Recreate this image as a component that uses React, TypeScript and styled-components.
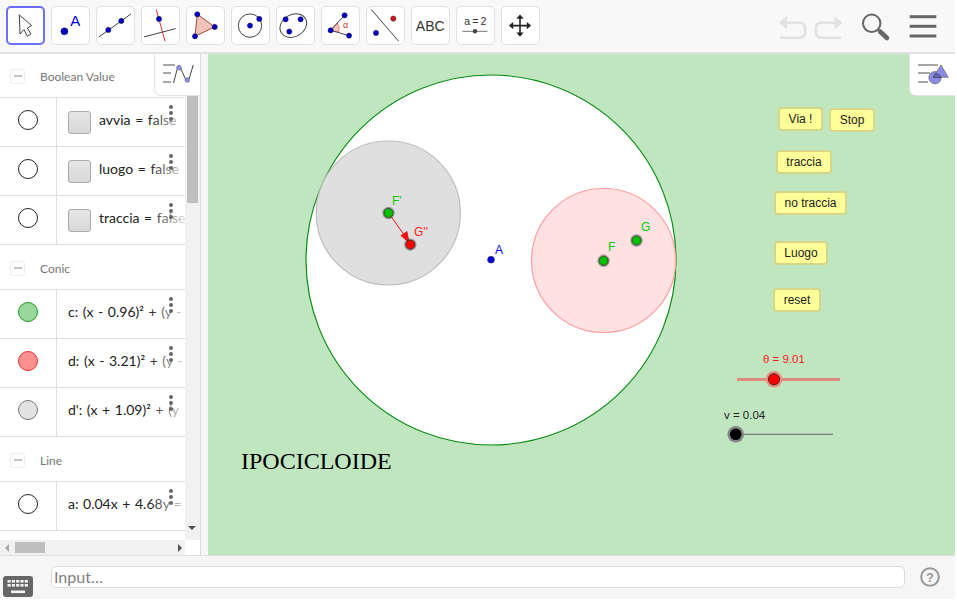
import React from "react";
import styled, { createGlobalStyle } from "styled-components";

const GlobalStyle = createGlobalStyle`
  html, body {
    margin: 0;
    padding: 0;
    background: #fff;
    font-family: "Liberation Sans", Arial, sans-serif;
  }
`;

const CANVAS_LEFT = 208;
const CANVAS_TOP = 54;

const Page = styled.div`
  width: 955px;
  height: 599px;
  display: flex;
  flex-direction: column;
  overflow: hidden;
`;

const Toolbar = styled.div`
  height: 46px;
  flex: none;
  display: flex;
  align-items: flex-start;
  gap: 6px;
  padding: 6px 0 0 6px;
  background: #f8f8f8;
  border-bottom: 2px solid #e2e2e2;
`;

const ToolButton = styled.div<{ $active?: boolean }>`
  width: 39px;
  height: 39px;
  flex: none;
  box-sizing: border-box;
  background: #fff;
  border-radius: 5px;
  border: ${({ $active }) => ($active ? "2px solid #6a70f6" : "1px solid #e1e1e1")};
  overflow: hidden;

  svg {
    display: block;
    margin: ${({ $active }) => ($active ? "-2px" : "-1px")};
  }
`;

const ToolbarRight = styled.div`
  margin-left: auto;
  display: flex;
`;

const Main = styled.div`
  flex: 1;
  min-height: 0;
  display: flex;
`;

const AlgebraPanel = styled.div`
  position: relative;
  width: 200px;
  flex: none;
  display: flex;
  flex-direction: column;
  background: #fff;
`;

const AlgebraBody = styled.div`
  flex: 1;
  min-height: 0;
  display: flex;
`;

const ItemList = styled.div`
  position: relative;
  width: 185px;
  flex: none;
  overflow: hidden;
`;

const ItemScroll = styled.div`
  margin-top: -1px;
`;

const GroupHeader = styled.div`
  height: 45px;
  display: flex;
  align-items: center;
  padding: 2px 0 0 10px;
  box-sizing: border-box;
  border-bottom: 1px solid #dedede;
  color: #777;
  font-family: Lato, sans-serif;
  font-size: 12px;
`;

const Collapse = styled.span`
  width: 15px;
  height: 15px;
  margin-right: 15px;
  box-sizing: border-box;
  border: 1px solid #ececec;
  border-radius: 3px;
  display: flex;
  align-items: center;
  justify-content: center;

  &::before {
    content: "";
    width: 8px;
    height: 2px;
    background: #c4c4c4;
  }
`;

const ItemRow = styled.div`
  position: relative;
  height: 49px;
  box-sizing: border-box;
  display: flex;
  align-items: center;
  border-bottom: 1px solid #dedede;
  font-family: Lato, sans-serif;
  font-size: 14px;
  word-spacing: 1px;
  color: #222;
  white-space: nowrap;
  overflow: hidden;
`;

const MarbleCell = styled.div`
  width: 57px;
  height: 100%;
  flex: none;
  box-sizing: border-box;
  padding-bottom: 4px;
  display: flex;
  align-items: center;
  justify-content: center;
  border-right: 1px solid #dedede;
`;

const Marble = styled.span<{ $fill: string; $edge: string }>`
  width: 20px;
  height: 20px;
  box-sizing: border-box;
  border-radius: 50%;
  background: ${({ $fill }) => $fill};
  border: 1px solid ${({ $edge }) => $edge};
`;

const ItemText = styled.div`
  display: flex;
  align-items: center;
  padding-left: 11px;
  flex: none;
`;

const Formula = styled.span`
  position: relative;
  top: -3px;
`;

const CheckBox = styled.span`
  width: 23px;
  height: 23px;
  margin-right: 8px;
  box-sizing: border-box;
  background: linear-gradient(#e6e6e6, #d8d8d8);
  border: 1px solid #aaa;
  border-radius: 3px;
`;

const Fade = styled.div`
  position: absolute;
  top: 0;
  bottom: 0;
  right: 0;
  width: 36px;
  background: linear-gradient(to right, rgba(255, 255, 255, 0), rgba(255, 255, 255, 0.85));
`;

const MoreDots = styled.div`
  position: absolute;
  top: 7px;
  left: 169px;
  display: flex;
  flex-direction: column;
  gap: 2px;

  span {
    width: 4px;
    height: 4px;
    border-radius: 50%;
    background: #666;
  }
`;

const VScroll = styled.div`
  position: relative;
  width: 15px;
  flex: none;
  background: #f1f1f1;
`;

const VThumb = styled.div`
  margin: 41px 2px 0;
  height: 108px;
  background: #bfbfbf;
`;

const HScrollRow = styled.div`
  height: 15px;
  flex: none;
  display: flex;
`;

const HScroll = styled.div`
  position: relative;
  width: 185px;
  background: #f1f1f1;
`;

const HThumb = styled.div`
  margin: 2px 0 0 15px;
  width: 30px;
  height: 11px;
  background: #bfbfbf;
`;

const ScrollArrow = styled.span<{ $dir: "left" | "right" | "down"; $dim?: boolean }>`
  position: absolute;
  width: 0;
  height: 0;
  border: 4px solid transparent;
  ${({ $dir, $dim }) => {
    const color = $dim ? "#a8a8a8" : "#505050";
    if ($dir === "left") return `left: 1px; top: 4px; border-right-color: ${color};`;
    if ($dir === "right") return `right: -1px; top: 4px; border-left-color: ${color};`;
    return `left: 3px; bottom: 6px; border-top-color: ${color};`;
  }}
`;

const Splitter = styled.div`
  width: 8px;
  flex: none;
  box-sizing: border-box;
  background: #f6f6f6;
  border-left: 1px solid #dcdcdc;
`;

const StyleToggle = styled.div`
  position: absolute;
  top: 0;
  right: 0;
  width: 45px;
  height: 41px;
  background: #fff;
  border-radius: 0 0 0 6px;
  box-shadow: 0 0 0 1px #e4e4e4;
  clip-path: inset(0 0 -2px -2px);

  svg {
    display: block;
  }
`;

const Canvas = styled.div`
  position: relative;
  flex: 1;
  min-width: 0;
  background: #c0e6c0;
  overflow: hidden;

  > svg {
    display: block;
  }
`;

const Title = styled.div`
  position: absolute;
  left: ${241 - CANVAS_LEFT}px;
  top: ${447 - CANVAS_TOP}px;
  font-family: "Liberation Serif", serif;
  font-size: 24px;
  line-height: 28px;
  color: #000;
`;

const CanvasButton = styled.div<{ $x: number; $y: number; $w: number }>`
  position: absolute;
  left: ${({ $x }) => $x - CANVAS_LEFT}px;
  top: ${({ $y }) => $y - CANVAS_TOP}px;
  width: ${({ $w }) => $w}px;
  height: 24px;
  box-sizing: border-box;
  display: flex;
  align-items: center;
  justify-content: center;
  background: #ffff99;
  border: 2px solid #d6d68a;
  border-radius: 4px;
  font-size: 12px;
  color: #222;
`;

const BottomBar = styled.div`
  height: 44px;
  flex: none;
  position: relative;
  display: flex;
  align-items: flex-start;
  box-sizing: border-box;
  padding: 10px 0 0 51px;
  background: #f6f6f6;
  border-top: 1px solid #dfdfdf;
`;

const InputBox = styled.div`
  width: 854px;
  height: 22px;
  box-sizing: border-box;
  padding: 0 2px;
  background: #fff;
  border: 1px solid #dcdcdc;
  border-radius: 5px;
  font-family: Lato, sans-serif;
  font-size: 16px;
  line-height: 20px;
  color: #808080;
`;

const KeyboardButton = styled.div`
  position: absolute;
  left: 3px;
  top: 20px;

  svg {
    display: block;
  }
`;

const HelpButton = styled.div`
  margin-left: 15px;
  margin-top: 1px;

  svg {
    display: block;
  }
`;

const BLUE = "#0000cc";
const EDGE = "#1a1a3a";

const ToolPoint = ({ x, y, r = 2.6, fill = BLUE }: { x: number; y: number; r?: number; fill?: string }) => (
  <circle cx={x} cy={y} r={r} fill={fill} stroke={EDGE} strokeWidth={0.5} />
);

const ToolIcon = ({ children }: { children: React.ReactNode }) => (
  <svg width="39" height="39" viewBox="0 0 39 39">
    {children}
  </svg>
);

const tools: React.ReactNode[] = [
  <ToolIcon key="move">
    <path
      d="M13.3 8.9 L14 28 L18 23.6 L21.3 30.3 L25 28 L21.3 22 L25.7 19.6 Z"
      fill="#fff"
      stroke="#444"
      strokeWidth="1"
      strokeLinejoin="round"
    />
  </ToolIcon>,
  <ToolIcon key="point">
    <ToolPoint x={13.4} y={25.3} r={3.5} />
    <text x={19.2} y={20} fontFamily="Liberation Sans, sans-serif" fontSize="15" fill="#0000dd">
      A
    </text>
  </ToolIcon>,
  <ToolIcon key="line">
    <line x1={3} y1={30.9} x2={35} y2={7.9} stroke="#444" strokeWidth="1" />
    <ToolPoint x={12.3} y={23.9} />
    <ToolPoint x={25.3} y={14.9} />
  </ToolIcon>,
  <ToolIcon key="perp">
    <line x1={15.3} y1={3.6} x2={24} y2={35.3} stroke="#e03030" strokeWidth="1" />
    <line x1={3} y1={30.9} x2={34.7} y2={22.6} stroke="#444" strokeWidth="1" />
    <ToolPoint x={18} y={12.9} />
  </ToolIcon>,
  <ToolIcon key="poly">
    <path d="M11.3 8.3 L28.7 20.9 L9 30.3 Z" fill="#f0c4b8" stroke="#a84a38" strokeWidth="1" />
    <ToolPoint x={11.3} y={8.3} />
    <ToolPoint x={28.7} y={20.9} />
    <ToolPoint x={9} y={30.3} />
  </ToolIcon>,
  <ToolIcon key="circle">
    <circle cx={19} cy={19.6} r={11.7} fill="none" stroke="#444" strokeWidth="1" />
    <ToolPoint x={19} y={19.6} />
    <ToolPoint x={28.3} y={12.9} />
  </ToolIcon>,
  <ToolIcon key="conic">
    <ellipse cx={17.3} cy={19.6} rx={14} ry={11} transform="rotate(-30 17.3 19.6)" fill="none" stroke="#444" strokeWidth="1" />
    <ToolPoint x={9.6} y={13.3} />
    <ToolPoint x={24.6} y={13.3} />
    <ToolPoint x={13.3} y={25.6} />
  </ToolIcon>,
  <ToolIcon key="angle">
    <path d="M9.6 24.3 L16.1 17 Q19.6 21 17.6 26.2 Z" fill="#f4c4bc" stroke="#e05050" strokeWidth="0.6" />
    <path d="M23.6 9.3 L9.6 24.3 L28 29.6" fill="none" stroke="#444" strokeWidth="1" />
    <ToolPoint x={9.6} y={24.3} />
    <ToolPoint x={23.6} y={9.3} />
    <ToolPoint x={28} y={29.6} />
    <text x={22} y={22} fontFamily="Liberation Sans, sans-serif" fontSize="9" fill="#e03030">
      α
    </text>
  </ToolIcon>,
  <ToolIcon key="reflect">
    <line x1={5.3} y1={3.6} x2={32.7} y2={35.3} stroke="#444" strokeWidth="1" />
    <ToolPoint x={27.3} y={12.6} fill="#e01010" />
    <ToolPoint x={10} y={26.9} />
  </ToolIcon>,
  <ToolIcon key="text">
    <text x={19.2} y={25} textAnchor="middle" fontFamily="Liberation Sans, sans-serif" fontSize="14" fill="#333">
      ABC
    </text>
  </ToolIcon>,
  <ToolIcon key="slider">
    <text x={19} y={18.5} textAnchor="middle" letterSpacing="-0.4" fontFamily="Liberation Sans, sans-serif" fontSize="10.5" fill="#333">
      a = 2
    </text>
    <line x1={6.3} y1={25.3} x2={31.6} y2={25.3} stroke="#777" strokeWidth="1" />
    <circle cx={19} cy={25.3} r={2.2} fill="#444" />
  </ToolIcon>,
  <ToolIcon key="pan">
    <path
      transform="translate(-0.4 0)"
      d="M19.4 8.5 L23 12.8 L20.2 12.8 L20.2 18.8 L26.2 18.8 L26.2 16 L30.5 19.6 L26.2 23.2 L26.2 20.4 L20.2 20.4 L20.2 26.4 L23 26.4 L19.4 30.7 L15.8 26.4 L18.6 26.4 L18.6 20.4 L12.6 20.4 L12.6 23.2 L8.3 19.6 L12.6 16 L12.6 18.8 L18.6 18.8 L18.6 12.8 L15.8 12.8 Z"
      fill="#222"
    />
  </ToolIcon>,
];

const TopRightIcons = () => (
  <svg width="182" height="46" viewBox="773 6 182 46">
    <g fill="none" stroke="#e2e2e2" strokeWidth="2.6">
      <path d="M786 22.7 H800 Q805 22.7 805 28 V32 Q805 37.7 800 37.7 H780" />
      <path d="M835 22.7 H821 Q816 22.7 816 28 V32 Q816 37.7 821 37.7 H841" />
    </g>
    <path d="M779 22.7 L787 16 L787 29.3 Z" fill="#e2e2e2" />
    <path d="M842.5 22.7 L834.5 16 L834.5 29.3 Z" fill="#e2e2e2" />
    <circle cx={871.7} cy={23.3} r={8.7} fill="none" stroke="#666" strokeWidth="2" />
    <line x1={880} y1={31.5} x2={887} y2={38} stroke="#666" strokeWidth="4.6" strokeLinecap="round" />
    <g fill="#666">
      <rect x={909.7} y={15.2} width={26.6} height={3} />
      <rect x={909.7} y={24.8} width={26.6} height={3} />
      <rect x={909.7} y={34.5} width={26.6} height={3} />
    </g>
  </svg>
);

const AlgebraStyleIcon = () => (
  <svg width="45" height="41" viewBox="155 54 45 41">
    <g fill="#a6a6a6">
      <rect x={163} y={64} width={12} height={2} />
      <rect x={163} y={72} width={8} height={2} />
      <rect x={163} y={81} width={8} height={2} />
    </g>
    <path d="M173.5 83 L177.5 68 Q179 65.5 180.5 68 L185.5 79 Q187.3 82 189 79 L193.3 65" fill="none" stroke="#444" strokeWidth="1" />
    <circle cx={179} cy={67.7} r={2.4} fill="#8a8ae8" stroke="#666" strokeWidth="0.5" />
    <circle cx={187.3} cy={80} r={2.4} fill="#8a8ae8" stroke="#666" strokeWidth="0.5" />
  </svg>
);

const CanvasStyleIcon = () => (
  <svg width="45" height="41" viewBox="910 54 45 41">
    <g fill="#a6a6a6">
      <rect x={918} y={64} width={20} height={2} />
      <rect x={918} y={72} width={12} height={2} />
      <rect x={918} y={81} width={10} height={2} />
    </g>
    <circle cx={935} cy={77.7} r={6.2} fill="#8a8ae8" stroke="#666" strokeWidth="0.7" />
    <path d="M941 65 L948.3 77.3 L933.3 77.3 Z" fill="#8a8ae8" stroke="#666" strokeWidth="0.7" />
    <path d="M935.6 73.5 A 6.2 6.2 0 0 1 941 77.3 L933.3 77.3 Z" fill="#6868c8" stroke="#333" strokeWidth="0.7" />
  </svg>
);

const KeyboardIcon = () => (
  <svg width="30" height="21" viewBox="0 0 30 21">
    <rect width="30" height="21" rx="3" fill="#666" />
    <g fill="#f4f4f4">
      {[0, 1, 2, 3, 4].map((i) => (
        <React.Fragment key={i}>
          <rect x={4.5 + i * 4.3} y={4} width={3.2} height={2.6} />
          <rect x={4.5 + i * 4.3} y={8} width={3.2} height={2.6} />
        </React.Fragment>
      ))}
      <rect x={8} y={14.5} width={14} height={2.6} />
    </g>
  </svg>
);

const HelpIcon = () => (
  <svg width="20" height="20" viewBox="0 0 20 20">
    <circle cx={10} cy={10} r={8.8} fill="none" stroke="#999" strokeWidth="2" />
    <text x={10} y={14.6} textAnchor="middle" fontFamily="Liberation Sans, sans-serif" fontSize="13" fontWeight="bold" fill="#999">
      ?
    </text>
  </svg>
);

const GeoPoint = ({ x, y, r = 5, fill }: { x: number; y: number; r?: number; fill: string }) => (
  <g>
    <circle cx={x} cy={y} r={r + 0.6} fill="none" stroke="rgba(90,90,90,0.55)" strokeWidth="1.2" />
    <circle cx={x} cy={y} r={r - 0.4} fill={fill} stroke="#222" strokeWidth="0.8" />
  </g>
);

const GeoLabel = ({ x, y, color, size = 12, children }: { x: number; y: number; color: string; size?: number; children: React.ReactNode }) => (
  <text x={x} y={y} fill={color} fontFamily="Liberation Sans, sans-serif" fontSize={size}>
    {children}
  </text>
);

const Construction = () => (
  <svg width="747" height="501" viewBox={`${CANVAS_LEFT} ${CANVAS_TOP} 747 501`}>
    <circle cx={491} cy={260} r={185} fill="#fff" stroke="#0a8f14" strokeWidth="1.2" />
    <circle cx={388.3} cy={213} r={72} fill="#dfdfdf" stroke="#bdbdbd" strokeWidth="1.2" />
    <circle cx={603.6} cy={260.5} r={72} fill="#ffe1e1" stroke="#ff9c9c" strokeWidth="1.2" />

    <line x1={388.5} y1={213} x2={405} y2={236} stroke="#f01010" strokeWidth="1" />
    <path d="M410 244 L400.5 235.5 L407.2 231 Z" fill="#f01010" />

    <GeoPoint x={388.5} y={213} fill="#00c000" />
    <GeoPoint x={410.3} y={244.6} fill="#ff0000" />
    <circle cx={491} cy={259.7} r={3.4} fill="#0000dc" stroke="#334" strokeWidth="0.6" />
    <GeoPoint x={603.6} y={260.8} fill="#00c000" />
    <GeoPoint x={636.5} y={240.5} fill="#00c000" />

    <GeoLabel x={392} y={205} color="#00cc00">F'</GeoLabel>
    <GeoLabel x={414} y={236} color="#ff1818">G''</GeoLabel>
    <GeoLabel x={495} y={254} color="#0000f0">A</GeoLabel>
    <GeoLabel x={608} y={251} color="#00cc00">F</GeoLabel>
    <GeoLabel x={641} y={231} color="#00cc00">G</GeoLabel>

    <line x1={737} y1={379.5} x2={840} y2={379.5} stroke="#e08a7c" strokeWidth="3" />
    <circle cx={774} cy={379.3} r={8.3} fill="#e8907f" />
    <circle cx={774} cy={379.3} r={5.6} fill="#ff0000" stroke="#222" strokeWidth="0.8" />
    <GeoLabel x={763} y={363} color="#ff1818" size={11.5}>
      θ = 9.01
    </GeoLabel>

    <line x1={736} y1={434.3} x2={833} y2={434.3} stroke="#666" strokeWidth="1" />
    <circle cx={735.7} cy={434.3} r={8.3} fill="#858585" />
    <circle cx={735.7} cy={434.3} r={5.8} fill="#000" />
    <GeoLabel x={724} y={419} color="#222" size={11.5}>
      v = 0.04
    </GeoLabel>
  </svg>
);

const canvasButtons = [
  { label: "Via !", x: 778, y: 107, w: 45 },
  { label: "Stop", x: 829, y: 108, w: 46 },
  { label: "traccia", x: 776, y: 150, w: 56 },
  { label: "no traccia", x: 774, y: 191, w: 73 },
  { label: "Luogo", x: 774, y: 241, w: 54 },
  { label: "reset", x: 773, y: 288, w: 48 },
];

type Item = { text: string; check?: boolean; fill?: string; edge?: string };

const groups: { title: string; items: Item[] }[] = [
  {
    title: "Boolean Value",
    items: [
      { text: "avvia = false", check: true },
      { text: "luogo = false", check: true },
      { text: "traccia = false", check: true },
    ],
  },
  {
    title: "Conic",
    items: [
      { text: "c: (x - 0.96)² + (y -", fill: "#99d699", edge: "#1a9a1a" },
      { text: "d: (x - 3.21)² + (y -", fill: "#ff9090", edge: "#e03030" },
      { text: "d': (x + 1.09)² + (y", fill: "#e2e2e2", edge: "#777" },
    ],
  },
  {
    title: "Line",
    items: [{ text: "a: 0.04x + 4.68y =" }],
  },
];

const App = () => (
  <Page>
    <GlobalStyle />
    <Toolbar>
      {tools.map((icon, i) => (
        <ToolButton key={i} $active={i === 0}>
          {icon}
        </ToolButton>
      ))}
      <ToolbarRight>
        <TopRightIcons />
      </ToolbarRight>
    </Toolbar>
    <Main>
      <AlgebraPanel>
        <AlgebraBody>
          <ItemList>
            <ItemScroll>
              {groups.map((group) => (
                <React.Fragment key={group.title}>
                  <GroupHeader>
                    <Collapse />
                    {group.title}
                  </GroupHeader>
                  {group.items.map((item) => (
                    <ItemRow key={item.text}>
                      <MarbleCell>
                        <Marble $fill={item.fill ?? "#fff"} $edge={item.edge ?? "#222"} />
                      </MarbleCell>
                      <ItemText>
                        {item.check && <CheckBox />}
                        <Formula>{item.text}</Formula>
                      </ItemText>
                      <Fade />
                      <MoreDots>
                        <span />
                        <span />
                        <span />
                      </MoreDots>
                    </ItemRow>
                  ))}
                </React.Fragment>
              ))}
            </ItemScroll>
          </ItemList>
          <VScroll>
            <VThumb />
            <ScrollArrow $dir="down" />
          </VScroll>
        </AlgebraBody>
        <HScrollRow>
          <HScroll>
            <ScrollArrow $dir="left" $dim />
            <HThumb />
            <ScrollArrow $dir="right" />
          </HScroll>
        </HScrollRow>
        <StyleToggle>
          <AlgebraStyleIcon />
        </StyleToggle>
      </AlgebraPanel>
      <Splitter />
      <Canvas>
        <Construction />
        <Title>IPOCICLOIDE</Title>
        {canvasButtons.map((b) => (
          <CanvasButton key={b.label} $x={b.x} $y={b.y} $w={b.w}>
            {b.label}
          </CanvasButton>
        ))}
        <StyleToggle>
          <CanvasStyleIcon />
        </StyleToggle>
      </Canvas>
    </Main>
    <BottomBar>
      <KeyboardButton>
        <KeyboardIcon />
      </KeyboardButton>
      <InputBox>Input…</InputBox>
      <HelpButton>
        <HelpIcon />
      </HelpButton>
    </BottomBar>
  </Page>
);

export default App;
